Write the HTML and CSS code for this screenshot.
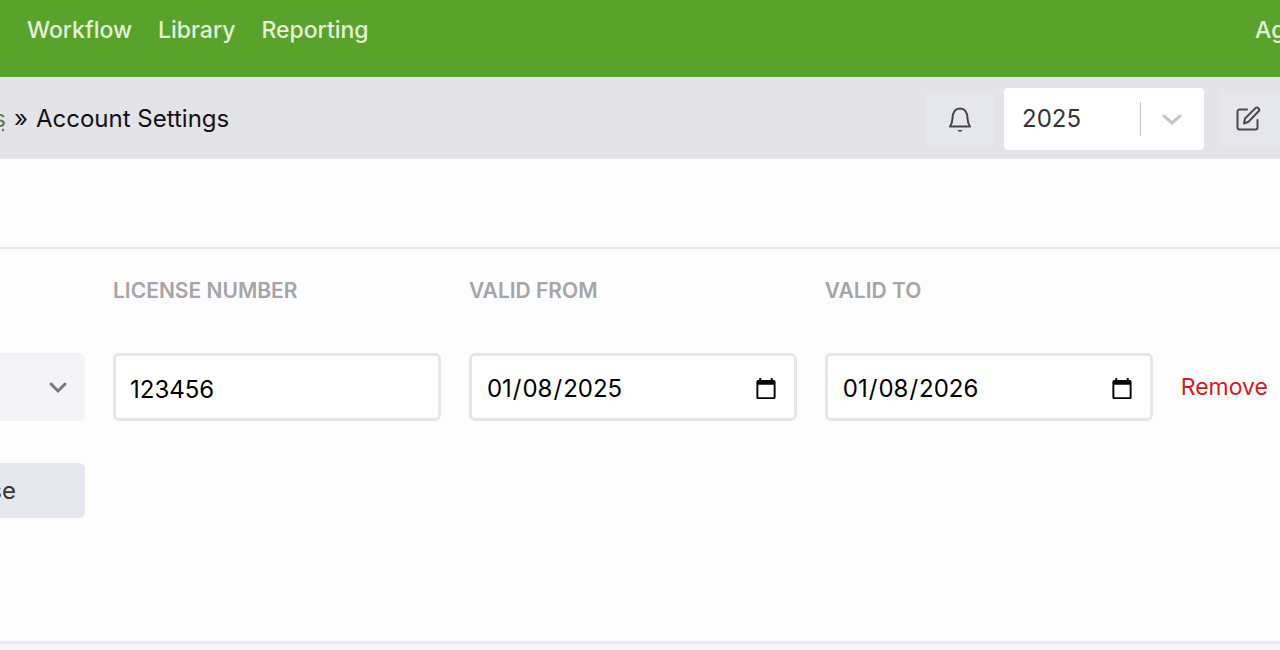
FILE: index.html
```
<!DOCTYPE html>
<html lang="en">
<head>
    <meta charset="UTF-8">
    <meta name="viewport" content="width=device-width, initial-scale=1.0">
    <title>Account Settings</title>
    <link rel="stylesheet" href="styles.css">
</head>
<body>
    <header class="navbar">
        <nav class="nav-links">
            <a href="#">Workflow</a>
            <a href="#">Library</a>
            <a href="#">Reporting</a>
        </nav>
        <a class="nav-agency" href="#">Ag</a>
    </header>

    <div class="toolbar">
        <div class="breadcrumb">
            <a href="#">s</a>
            <span>»</span>
            <span>Account Settings</span>
        </div>
        <div class="tools">
            <button class="icon-btn" type="button" aria-label="Notifications">
                <svg width="26" height="28" viewBox="0 0 26 28" fill="none" stroke="#44444c" stroke-width="2">
                    <path d="M3 21.500c1.600-2 2.300-4 2.500-8C5.700 7 8.500 3.500 13 3.500s7.300 3.500 7.500 10c.2 4 .9 6 2.500 8z" stroke-linejoin="round"/>
                    <path d="M10 25h6l-3 2z" fill="#44444c" stroke="none"/>
                </svg>
            </button>
            <div class="year">
                <select aria-label="Year">
                    <option>2025</option>
                </select>
                <svg class="arrow" width="24" height="24" viewBox="0 0 24 24" fill="none" stroke="#c6c6c8" stroke-width="3" stroke-linecap="round">
                    <path d="M4 9l8 7 8-7"/>
                </svg>
            </div>
            <button class="icon-btn edit" type="button" aria-label="Edit">
                <svg width="26" height="26" viewBox="0 0 26 26" fill="none" stroke="#4a4a50" stroke-width="2" stroke-linejoin="round" stroke-linecap="round">
                    <path d="M12 3.500H4.500a2 2 0 0 0-2 2v16a2 2 0 0 0 2 2h16a2 2 0 0 0 2-2V14"/>
                    <path d="M9 17.500l1-5L20.300 2.200a2 2 0 0 1 3 0l.3.300a2 2 0 0 1 0 2.800L13.500 15.700z"/>
                </svg>
            </button>
        </div>
    </div>

    <main class="content">
        <form class="licenses">
            <label class="heading number" for="license-number">License number</label>
            <label class="heading" for="valid-from">Valid from</label>
            <label class="heading" for="valid-to">Valid to</label>

            <div class="type">
                <select aria-label="License type">
                    <option></option>
                </select>
                <svg class="arrow" width="24" height="24" viewBox="0 0 24 24" fill="none" stroke="#77777c" stroke-width="3" stroke-linecap="round">
                    <path d="M5 9l7 7 7-7"/>
                </svg>
            </div>
            <input type="text" id="license-number" value="123456">
            <input type="date" id="valid-from" value="2025-01-08">
            <input type="date" id="valid-to" value="2026-01-08">
            <a class="remove" href="#">Remove</a>

            <button class="add" type="button">se</button>
        </form>
    </main>
</body>
</html>
```

FILE: styles.css
```
* {
    box-sizing: border-box;
}
body {
    margin: 0;
    min-height: 100vh;
    display: flex;
    flex-direction: column;
    background-color: #f6f6fb;
    color: #111116;
    font-family: Inter, "Liberation Sans", sans-serif;
    font-size: 24px;
    line-height: 32px;
    overflow-x: hidden;
}
a {
    text-decoration: none;
}
input, select, button {
    font: inherit;
    color: inherit;
    margin: 0;
}
.navbar {
    display: flex;
    justify-content: space-between;
    height: 77px;
    padding: 14px 0 0 27px;
    background-color: #59a32c;
    font-size: 23px;
    font-weight: 500;
    overflow: hidden;
}
.navbar a {
    color: #e3f0da;
}
.nav-links {
    display: flex;
    gap: 26px;
}
.nav-agency {
    width: 25px;
}
.toolbar {
    display: flex;
    justify-content: space-between;
    align-items: center;
    height: 82px;
    padding-top: 2px;
    background-color: #e4e3e8;
    overflow: hidden;
}
.breadcrumb {
    display: flex;
    gap: 8px;
}
.breadcrumb a {
    display: flex;
    justify-content: flex-end;
    width: 6px;
    overflow: hidden;
    color: #5c7a52;
    text-decoration: underline dotted;
}
.tools {
    display: flex;
    align-items: center;
    gap: 10px;
}
.icon-btn {
    display: flex;
    align-items: center;
    justify-content: center;
    width: 68px;
    height: 56px;
    padding: 0;
    border: none;
    border-radius: 4px;
    background-color: #e6e7ec;
}
.icon-btn.edit {
    width: 60px;
    margin-left: 6px;
    padding-right: 4px;
    border-radius: 4px 0 0 4px;
}
.year, .type {
    position: relative;
}
.year select {
    display: block;
    appearance: none;
    width: 200px;
    height: 62px;
    padding: 0 18px;
    border: none;
    border-radius: 4px;
    background-color: #fff;
    color: #333338;
}
.year::after {
    content: "";
    position: absolute;
    top: 14px;
    right: 63px;
    width: 1px;
    height: 34px;
    background-color: #c4c4c6;
}
.arrow {
    position: absolute;
    top: 50%;
    margin-top: -12px;
    pointer-events: none;
}
.year .arrow {
    right: 20px;
}
.type .arrow {
    right: 15px;
}
.content {
    margin-top: 88px;
    min-height: 397px;
    border-top: 2px solid #eae8ed;
    border-bottom: 3px solid #ebebef;
    background-color: #fdfdfe;
}
.toolbar + .content {
    box-shadow: 0 -88px #fdfdfe;
}
.licenses {
    display: grid;
    grid-template-columns: 85px 1fr 1fr 1fr auto;
    column-gap: 28px;
    align-items: center;
    padding: 26px 12px 0 0;
}
.heading {
    margin-bottom: 46px;
    color: #a6a5a8;
    font-size: 21px;
    font-weight: 600;
    text-transform: uppercase;
}
.heading.number {
    grid-column: 2;
}
.type {
    grid-column: 1;
}
.type select {
    display: block;
    appearance: none;
    width: 100%;
    height: 68px;
    border: none;
    border-radius: 0 6px 6px 0;
    background-color: #f3f3f8;
}
.licenses input {
    width: 100%;
    min-width: 0;
    height: 68px;
    padding: 4px 14px 0;
    border: 3px solid #e7e5ea;
    border-radius: 6px;
    background-color: #fff;
    color: #000;
}
.remove {
    color: #d01b1f;
    font-size: 23px;
}
.add {
    grid-column: 1;
    display: flex;
    align-items: center;
    justify-content: flex-end;
    height: 55px;
    margin-top: 42px;
    padding: 0 69px 0 0;
    border: none;
    border-radius: 0 6px 6px 0;
    background-color: #e6e7ec;
    color: #333338;
    overflow: hidden;
}
```
